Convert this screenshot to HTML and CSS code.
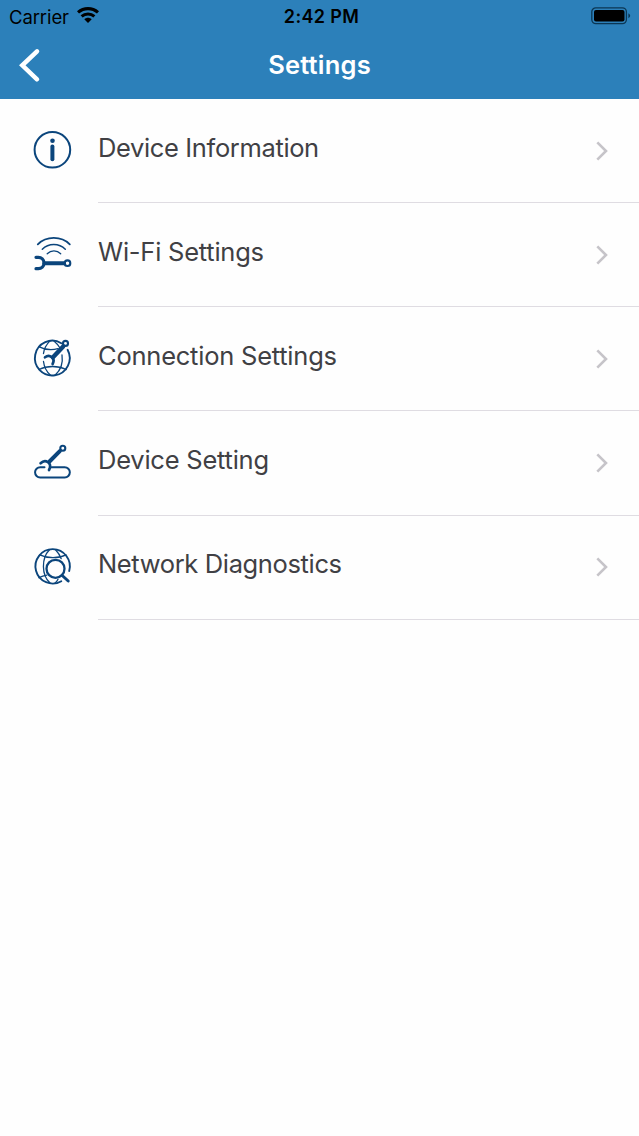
FILE: index.html
```
<!DOCTYPE html>
<html lang="en">
<head>
    <meta charset="UTF-8">
    <meta name="viewport" content="width=device-width, initial-scale=1.0">
    <title>Settings</title>
    <link rel="stylesheet" href="styles.css">
</head>
<body>

<header class="header">
    <div class="status-bar">
        <div class="carrier">
            <span class="carrier-name">Carrier</span>
            <svg class="wifi" width="22" height="16" viewBox="0 0 22 16">
                <g fill="none" stroke="#000" stroke-width="3.1">
                    <path d="M1 5.4C6.8 .3 15.2 .3 21 5.4"/>
                    <path d="M4.6 9.4C8.3 6.2 13.7 6.2 17.4 9.4"/>
                </g>
                <path d="M7.3 12.3C9.5 10.3 12.5 10.3 14.7 12.3L11 16Z"/>
            </svg>
        </div>
        <span class="time">2:42 PM</span>
        <div class="battery-box">
            <svg class="battery" width="42" height="20" viewBox="0 0 42 20">
                <rect x="1.8" y=".8" width="34.6" height="15.8" rx="4" fill="none" stroke="#0b3654" stroke-width="1.3"/>
                <rect x="4" y="3" width="30.5" height="11.5" rx="2"/>
                <path d="M38.4 6.2Q42 8.7 38.4 11.2Z" fill="#0b3654"/>
            </svg>
        </div>
    </div>
    <div class="nav-bar">
        <svg class="back" width="24" height="36" viewBox="0 0 24 36">
            <path d="M20 4.3L5.3 18.3L20 32.3" fill="none" stroke="#fff" stroke-width="4.5" stroke-linecap="round"/>
        </svg>
        <h1 class="title">Settings</h1>
        <span></span>
    </div>
</header>

<ul class="menu">
    <li class="menu-item">
        <svg class="icon" viewBox="0 0 60 60">
            <circle cx="28.4" cy="29.8" r="17.8" stroke-width="2"/>
            <circle class="solid" cx="28.5" cy="20.8" r="2.3"/>
            <path d="M28.4 26.5V39.2" stroke-width="4"/>
        </svg>
        <div class="row">
            <span class="label info">Device Information</span>
            <svg class="chevron" viewBox="0 0 16 24"><path d="M3.3 3.3L12 12L3.3 20.7"/></svg>
        </div>
    </li>
    <li class="menu-item">
        <svg class="icon" viewBox="0 0 60 60">
            <path d="M13.8 20.3C22.2 11.8 37.4 11.8 45.8 20.3" stroke-width="1.8"/>
            <path d="M18.3 25.3C24.5 18.8 35.1 18.8 41.3 25.3" stroke-width="1.5"/>
            <path d="M23.2 29.8C27 26 32.9 26 36.7 29.8" stroke-width="1.3"/>
            <path d="M12 33.3H14.3A5.7 5.7 0 0 1 14.3 44.7H12" stroke-width="3.2"/>
            <path d="M20.5 39.2H40" stroke-width="4"/>
            <circle cx="43.5" cy="39.2" r="2.8" stroke-width="2.1"/>
        </svg>
        <div class="row">
            <span class="label wifi-settings">Wi-Fi Settings</span>
            <svg class="chevron" viewBox="0 0 16 24"><path d="M3.3 3.3L12 12L3.3 20.7"/></svg>
        </div>
    </li>
    <li class="menu-item">
        <svg class="icon" viewBox="0 0 60 60">
            <path d="M37.3 15.2A17.4 17.4 0 1 0 43.6 21.8" stroke-width="1.9"/>
            <g stroke-width="1.3">
                <path d="M26 12.9Q20.3 18.5 19.5 25.5M19.5 33.5Q20.5 42 26.5 47.2"/>
                <path d="M30 12.9Q34.2 16.5 36 20M38 27C39.2 35 36.8 42 31 47.2"/>
                <path d="M15.3 18.8C21 21.8 28.5 22.2 34 20.7"/>
                <path d="M15 41.5C23 37.5 34 37.5 42.2 41.5"/>
            </g>
            <path d="M21 29.3C25.5 25.8 31.8 30 28.6 36" stroke-width="2.7"/>
            <path d="M29 29.3L39.2 18.4" stroke-width="4.4"/>
            <circle cx="41.5" cy="15.4" r="2.5" stroke-width="2.1"/>
        </svg>
        <div class="row">
            <span class="label connection">Connection Settings</span>
            <svg class="chevron" viewBox="0 0 16 24"><path d="M3.3 3.3L12 12L3.3 20.7"/></svg>
        </div>
    </li>
    <li class="menu-item">
        <svg class="icon" viewBox="0 0 60 60">
            <path d="M20.5 35.2H16.2A5.1 5.1 0 0 0 16.2 45.5H40.7A5.1 5.1 0 0 0 40.7 35.2H27.5" stroke-width="2"/>
            <path d="M16.6 31.2C21.5 26.3 28.8 31.2 25 38" stroke-width="2.7"/>
            <path d="M25.5 29.5L35.8 19.2" stroke-width="4"/>
            <circle cx="38.8" cy="16.2" r="2.5" stroke-width="2.1"/>
        </svg>
        <div class="row">
            <span class="label device">Device Setting</span>
            <svg class="chevron" viewBox="0 0 16 24"><path d="M3.3 3.3L12 12L3.3 20.7"/></svg>
        </div>
    </li>
    <li class="menu-item">
        <svg class="icon" viewBox="0 0 60 60">
            <path d="M37.3 45.2A17.2 17.2 0 1 1 45.2 35" stroke-width="1.9"/>
            <g stroke-width="1.3">
                <path d="M25.5 13.7C17.3 22 17.3 39 26 47"/>
                <path d="M31.5 13.7Q35.5 17.8 37.2 22.7"/>
                <path d="M15.8 18.8C23.5 22.6 34.5 22.6 42 18.8"/>
                <path d="M15 41.7Q18.7 39.8 22.8 39.2"/>
                <path d="M34 43.3Q33 45.5 31 47"/>
            </g>
            <circle cx="31.5" cy="32.8" r="9" stroke-width="2.3"/>
            <path d="M38.2 39.5L44.2 45" stroke-width="3"/>
        </svg>
        <div class="row">
            <span class="label diagnostics">Network Diagnostics</span>
            <svg class="chevron" viewBox="0 0 16 24"><path d="M3.3 3.3L12 12L3.3 20.7"/></svg>
        </div>
    </li>
</ul>

</body>
</html>
```
FILE: styles.css
```
* {
    box-sizing: border-box;
}

body {
    margin: 0;
    font-family: Inter, "Liberation Sans", sans-serif;
    background-color: #fefefe;
    color: #404044;
}

svg {
    display: block;
    flex: none;
}

.header {
    height: 99px;
    background-color: #2c80ba;
}

.status-bar,
.nav-bar {
    display: grid;
    grid-template-columns: 1fr auto 1fr;
}

.status-bar {
    height: 40px;
    line-height: 22px;
    padding-top: 6px;
    color: #000;
    font-size: 19px;
}

.carrier {
    display: flex;
    gap: 8px;
    padding-left: 9px;
}

.carrier-name {
    width: 60px;
    font-size: 18.5px;
    letter-spacing: -0.1px;
    white-space: nowrap;
}

.wifi {
    margin-top: 1px;
}

.time {
    font-size: 18px;
    font-weight: 600;
    letter-spacing: 0.35px;
    padding-left: 4px;
}

.battery-box {
    display: flex;
    justify-content: flex-end;
    padding: 1px 7px 0 0;
}

.nav-bar {
    height: 58px;
}

.back {
    margin: 7px 0 0 17px;
}

.title {
    margin: 8px 0 0;
    font-size: 25.5px;
    letter-spacing: 0.2px;
    line-height: 34px;
    font-weight: 600;
    color: #fff;
}

.menu {
    margin: 0;
    padding: 0;
    list-style: none;
}

.menu-item {
    display: flex;
    height: 104.15px;
    padding-left: 24px;
}

.icon {
    width: 60px;
    height: 60px;
    margin: 20.8px 14px 0 0;
    fill: none;
    stroke: #0b457c;
    stroke-linecap: round;
}

.solid {
    fill: #0b457c;
    stroke: none;
}

.row {
    display: flex;
    flex: 1;
    justify-content: space-between;
    padding-right: 29px;
    border-bottom: 1px solid #dfdce2;
}

.label {
    margin-top: 32.5px;
    font-size: 25.5px;
    line-height: 32px;
    white-space: nowrap;
}

.info,
.diagnostics {
    letter-spacing: -0.36px;
}

.wifi-settings,
.connection,
.device {
    letter-spacing: -0.23px;
}

.chevron {
    width: 16px;
    height: 24px;
    margin-top: 39.8px;
    fill: none;
    stroke: #c6c4c9;
    stroke-width: 2.6;
}
```
